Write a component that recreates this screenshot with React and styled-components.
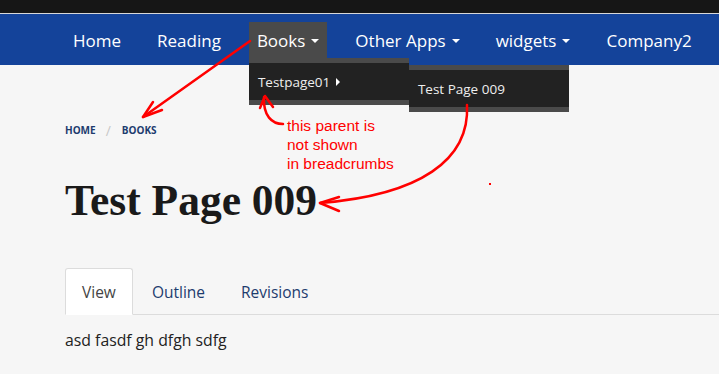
import React from 'react';
import styled, { createGlobalStyle } from 'styled-components';

const GlobalStyle = createGlobalStyle`
    html, body {
        margin: 0;
        padding: 0;
        background: #f6f6f6;
    }
    body {
        font-family: "Open Sans", "Liberation Sans", sans-serif;
    }
`;

const Page = styled.div`
    position: relative;
    width: 719px;
    height: 374px;
    overflow: hidden;
    background: #f6f6f6;
`;

const TopBar = styled.div`
    height: 13px;
    background: #161616;
    border-bottom: 1px solid #d8d8d8;
`;

const NavBar = styled.nav`
    height: 51px;
    background: #14439a;
    display: flex;
    align-items: center;
`;

const NavList = styled.ul`
    list-style: none;
    margin: 0;
    padding: 0 0 0 65px;
    display: flex;
    gap: 20px;
    height: 36px;
    margin-top: 1px;
`;

const NavItem = styled.li`
    position: relative;
    display: flex;
    align-items: center;
    padding: 0 8px;
    color: #fff;
    font-size: 17px;
    background: ${({ active }) => (active ? '#4a4a4a' : 'transparent')};
`;

const CaretDown = styled.span`
    display: inline-block;
    margin-left: 6px;
    margin-top: 2px;
    border-left: 4px solid transparent;
    border-right: 4px solid transparent;
    border-top: 4px solid #fff;
`;

const CaretRight = styled.span`
    display: inline-block;
    margin-left: 6px;
    border-top: 4px solid transparent;
    border-bottom: 4px solid transparent;
    border-left: 4px solid #fff;
`;

const Dropdown = styled.div`
    position: absolute;
    top: ${({ top }) => top}px;
    left: ${({ left }) => left}px;
    width: 160px;
    background: #222;
    border-top: 5px solid #4a4a4a;
    border-bottom: 5px solid #4a4a4a;
    box-sizing: border-box;
    height: 47px;
    display: flex;
    align-items: center;
    padding: 0 9px;
    color: #eee;
    font-size: 13.5px;
    z-index: 5;
`;

const Content = styled.main`
    padding: 55px 0 0 65px;
`;

const Breadcrumb = styled.ol`
    list-style: none;
    margin: 0;
    padding: 0;
    display: flex;
    align-items: center;
    height: 20px;
    font-size: 10px;
    font-weight: 700;
    color: #1d3c6e;
    text-transform: uppercase;
`;

const Separator = styled.li`
    color: #c8c8c8;
    font-weight: 400;
    font-size: 14px;
    margin: 0 11px 0 10px;
`;

const Title = styled.h1`
    margin: 34px 0 0;
    font-family: "Liberation Serif", "DejaVu Serif", serif;
    font-weight: 700;
    font-size: 43.5px;
    line-height: 52px;
    color: #1a1a1a;
`;

const Tabs = styled.ul`
    list-style: none;
    margin: 42px 0 0;
    padding: 0;
    display: flex;
    border-bottom: 1px solid #dcdcdc;
`;

const Tab = styled.li`
    box-sizing: border-box;
    height: 47px;
    padding: 0 16px;
    margin-right: 2px;
    margin-bottom: -1px;
    display: flex;
    align-items: center;
    font-size: 15.5px;
    color: ${({ active }) => (active ? '#444' : '#1d3c6e')};
    background: ${({ active }) => (active ? '#fff' : 'transparent')};
    border: 1px solid ${({ active }) => (active ? '#dcdcdc' : 'transparent')};
    border-bottom-color: ${({ active }) => (active ? '#fff' : 'transparent')};
    border-radius: 3px 3px 0 0;
`;

const BodyText = styled.p`
    margin: 13px 0 0;
    font-size: 15.8px;
    line-height: 24px;
    color: #222;
`;

const Overlay = styled.svg`
    position: absolute;
    inset: 0;
    pointer-events: none;
    z-index: 10;
`;

const Note = styled.div`
    position: absolute;
    left: 287px;
    top: 116px;
    font-family: "Liberation Sans", Arial, sans-serif;
    font-size: 15.5px;
    line-height: 19px;
    color: #ff0000;
    z-index: 10;
`;

const red = '#ff0000';

const Annotations = () => (
    <Overlay width="719" height="374" viewBox="0 0 719 374">
        <g fill="none" stroke={red} strokeWidth="2.5" strokeLinecap="round" strokeLinejoin="round">
            <path d="M250 41 L143 117" />
            <path d="M153 102 L143 117 L162 110" />
            <path d="M283 124 C272 124 263 116 264 97" />
            <path d="M260 108 L265 96 L273 107" />
            <path d="M467 105 C470 160 420 195 320 203" />
            <path d="M339 197 L320 203 L339 211" />
        </g>
        <rect x="489" y="183" width="2" height="2" fill={red} />
    </Overlay>
);

const App = () => (
    <Page>
        <GlobalStyle />
        <TopBar />
        <NavBar>
            <NavList>
                <NavItem>Home</NavItem>
                <NavItem>Reading</NavItem>
                <NavItem active>
                    Books<CaretDown />
                    <Dropdown top={36} left={0}>
                        Testpage01<CaretRight />
                    </Dropdown>
                    <Dropdown top={43} left={160}>Test Page 009</Dropdown>
                </NavItem>
                <NavItem>Other Apps<CaretDown /></NavItem>
                <NavItem>widgets<CaretDown /></NavItem>
                <NavItem>Company2</NavItem>
            </NavList>
        </NavBar>
        <Content>
            <Breadcrumb>
                <li>Home</li>
                <Separator>/</Separator>
                <li>Books</li>
            </Breadcrumb>
            <Title>Test Page 009</Title>
            <Tabs>
                <Tab active>View</Tab>
                <Tab>Outline</Tab>
                <Tab>Revisions</Tab>
            </Tabs>
            <BodyText>asd fasdf gh dfgh sdfg</BodyText>
        </Content>
        <Note>
            this parent is<br />
            not shown<br />
            in breadcrumbs
        </Note>
        <Annotations />
    </Page>
);

export default App;
